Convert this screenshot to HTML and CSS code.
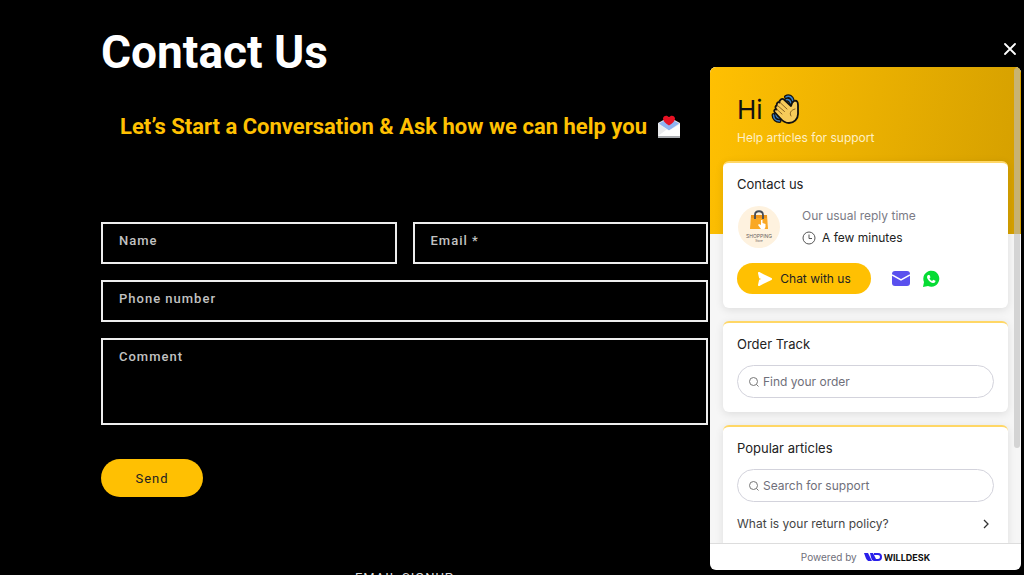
FILE: index.html
```
<!DOCTYPE html>
<html lang="en">
  <head>
    <meta charset="UTF-8" />
    <meta name="viewport" content="width=device-width, initial-scale=1.0" />
    <title>Contact Us</title>
    <link rel="stylesheet" href="styles.css">
  </head>
  <body>
    <main class="page">
      <h1>Contact Us</h1>
      <h2 class="subtitle">
        Let’s Start a Conversation &amp; Ask how we can help you
        <svg class="love-letter" viewBox="0 0 24 24" aria-hidden="true">
          <path d="M1 8 12 2l11 6v14H1z" fill="#e4e6ea" />
          <path d="M2 8.500 12 3l10 5.500-10 7z" fill="#8fb4f2" />
          <path d="M1 9l11 6.500L23 9v13H1z" fill="#fdfdfd" />
          <path d="M1 9l9 5.300L1 21z" fill="#e9eaec" />
          <path d="M1 21h22v2H1z" fill="#a9acb0" />
          <path d="M12 10.500C8 8 6 6 6 3.500c0-3 4.500-4 6-1 1.500-3 6-2 6 1 0 2.500-2 4.500-6 7z" fill="#e81123" />
        </svg>
      </h2>

      <form class="contact-form">
        <div class="field-row">
          <div class="field">
            <input type="text" id="name" name="name" />
            <label for="name">Name</label>
          </div>
          <div class="field">
            <input type="email" id="email" name="email" required />
            <label for="email">Email *</label>
          </div>
        </div>
        <div class="field">
          <input type="tel" id="phone" name="phone" />
          <label for="phone">Phone number</label>
        </div>
        <div class="field">
          <textarea id="comment" name="comment"></textarea>
          <label for="comment">Comment</label>
        </div>
        <button type="submit" class="send-btn">Send</button>
      </form>

      <h2 class="signup-title">EMAIL SIGNUP</h2>
    </main>

    <aside class="chat">
      <button type="button" class="chat-close" aria-label="Close">
        <svg viewBox="0 0 12 12" width="12" height="12">
          <path d="M1 1l10 10M11 1L1 11" stroke="#fff" stroke-width="1.800" stroke-linecap="round" />
        </svg>
      </button>

      <div class="chat-panel">
        <div class="chat-body">
          <div class="chat-header">
            <div class="greeting">
              Hi
              <svg class="wave" viewBox="0 0 28 30" aria-hidden="true">
                <g fill="none" stroke-linecap="round">
                  <path d="M15 3c3-2 6 0 7 4M15 6c2-1 4 0 5 3" stroke="#111" stroke-width="4" />
                  <path d="M2.500 21c0 4 3 6 6 6M5 20c0 3 2 4 4 4" stroke="#111" stroke-width="4" />
                  <path d="M15 3c3-2 6 0 7 4M15 6c2-1 4 0 5 3M2.500 21c0 4 3 6 6 6M5 20c0 3 2 4 4 4" stroke="#3b82c4" stroke-width="1.500" />
                </g>
                <path d="M9 24 3.500 18c-1-2 .500-3 2-2.500-2-2-1-4 .500-4-1-2 1-4 2.500-3C8 6 11 4 13 5.500l7 6.500c.500-2 1-4 3-5 3-1 4 1 4 4v9c0 5-4 9-9 9-4 0-6.500-2-9-5z" fill="#f7cb5a" stroke="#111" stroke-width="1.800" stroke-linejoin="round" />
                <path d="M6 15.500l5 4.500M6.500 11.500l7 6M9 8.500l7 6.500M24 15c-4 1-6 4-4 7" fill="none" stroke="#8a6420" stroke-linecap="round" />
              </svg>
            </div>
            <p>Help articles for support</p>
          </div>

          <div class="card">
            <h3>Contact us</h3>
            <div class="reply">
              <svg class="avatar" viewBox="0 0 42 42" role="img" aria-label="Shopping logo">
                <circle cx="21" cy="21" r="21" fill="#fef2df" />
                <path d="M13 9h16l1 14H12z" fill="#f9a825" />
                <path d="M13 9h16v3H13z" fill="#ef961c" />
                <path d="M17 13V9c0-5 8-5 8 0v4" fill="none" stroke="#444c58" stroke-width="1.800" />
                <path d="M23 23l-3-4 1-1 2 1v-5h1.500v3l3 1v3l-1 2z" fill="#fff" />
                <text x="21" y="32" font-size="5" text-anchor="middle" fill="#69635d">SHOPPING</text>
                <text x="21" y="36" font-size="3" text-anchor="middle" fill="#69635d">Store</text>
              </svg>
              <div>
                <div class="reply-label">Our usual reply time</div>
                <div class="reply-time">
                  <svg viewBox="0 0 14 14" width="14" height="14" fill="none" stroke="#555" aria-hidden="true">
                    <circle cx="7" cy="7" r="6" />
                    <path d="M7 3.500V7.500h3" />
                  </svg>
                  A few minutes
                </div>
              </div>
            </div>
            <div class="channels">
              <button type="button" class="chat-btn">
                <svg viewBox="0 0 16 16" width="16" height="16" aria-hidden="true">
                  <path d="M2 2 14 8 2 14 3 9.500 8 8 3 6.500z" fill="#fff" stroke="#fff" stroke-width="2" stroke-linejoin="round" />
                </svg>
                Chat with us
              </button>
              <a href="#" aria-label="Email">
                <svg viewBox="0 0 18 16" width="18" height="16">
                  <rect width="18" height="15" rx="3" fill="#5a50ee" />
                  <path d="M0 4l9 5 9-5" fill="none" stroke="#fff" stroke-width="1.500" />
                </svg>
              </a>
              <a href="#" aria-label="WhatsApp">
                <svg viewBox="0 0 18 18" width="18" height="18">
                  <path d="M1 17l1-5A8 8 0 1 1 6 16z" fill="#06dc34" />
                  <path d="M6 5l1.500 0 1 2.300-1 1.200c.6 1.200 1.400 1.900 2.600 2.400l1.100-1.200 2.300 1.100c0 1.700-1.300 2.400-2.600 2.200C8 12.500 5.200 9.500 5 7c0-.8.400-1.500 1-2z" fill="#fff" />
                </svg>
              </a>
            </div>
          </div>

          <div class="card">
            <h3>Order Track</h3>
            <div class="search">
              <svg viewBox="0 0 10 10" width="10" height="10" fill="none" stroke="#777" aria-hidden="true">
                <circle cx="4.500" cy="4.500" r="4" />
                <path d="M7.500 7.500l2 2" />
              </svg>
              <input type="text" placeholder="Find your order" aria-label="Find your order" />
            </div>
          </div>

          <div class="card">
            <h3>Popular articles</h3>
            <div class="search">
              <svg viewBox="0 0 10 10" width="10" height="10" fill="none" stroke="#777" aria-hidden="true">
                <circle cx="4.500" cy="4.500" r="4" />
                <path d="M7.500 7.500l2 2" />
              </svg>
              <input type="text" placeholder="Search for support" aria-label="Search for support" />
            </div>
            <a href="#" class="article">
              What is your return policy?
              <svg viewBox="0 0 6 10" width="6" height="10" aria-hidden="true">
                <path d="M1 1l4 4-4 4" fill="none" stroke="#333" stroke-width="1.300" />
              </svg>
            </a>
          </div>
          <div class="scroll-thumb"></div>
        </div>

        <div class="chat-footer">
          Powered by
          <a href="#" class="brand">
            <svg viewBox="0 0 18 8" width="18" height="8" aria-hidden="true">
              <path d="M0 0h4l4 8H5C3 8 2 6 0 0zM6 0h3l4 8h-3C8 8 7 5 6 0z" fill="#2a20ea" />
              <path d="M10 1h4a3 3 0 0 1 0 6h-2" fill="none" stroke="#2a20ea" stroke-width="2" />
            </svg>
            WILLDESK
          </a>
        </div>
      </div>
    </aside>
  </body>
</html>
```

FILE: styles.css
```
* {
  box-sizing: border-box;
}

body {
  display: flex;
  gap: 2px;
  height: 100vh;
  margin: 0;
  overflow: hidden;
  background: #000;
  font-family: Roboto, sans-serif;
}

h1,
h2,
h3,
p {
  margin: 0;
}

a {
  color: inherit;
  text-decoration: none;
}

svg {
  display: block;
  flex-shrink: 0;
}

button,
input,
textarea {
  font-family: inherit;
}

/* contact page */
.page {
  flex: 1;
  min-width: 0;
  padding: 24px 0 0 101px;
}

h1 {
  color: #fff;
  font-size: 46px;
  line-height: 56px;
}

.subtitle {
  display: flex;
  align-items: center;
  justify-content: center;
  gap: 10px;
  margin-top: 32px;
  padding-right: 8px;
  color: #ffc002;
  font-size: 22px;
  line-height: 30px;
  white-space: nowrap;
}

.love-letter {
  width: 24px;
  height: 24px;
}

.contact-form {
  display: flex;
  flex-direction: column;
  gap: 16px;
  margin-top: 80px;
}

.field-row {
  display: grid;
  grid-template-columns: 1fr 1fr;
  gap: 16px;
}

.field {
  position: relative;
}

.field input,
.field textarea {
  display: block;
  width: 100%;
  height: 42px;
  padding: 0 16px;
  background: #000;
  border: 2px solid #eee;
  border-radius: 0;
  color: #fff;
  font-size: 13px;
  resize: none;
}

.field textarea {
  height: 87px;
  padding-top: 10px;
}

.field label {
  position: absolute;
  top: 9px;
  left: 18px;
  color: #c2c2c2;
  font-size: 13px;
  font-weight: 500;
  line-height: 20px;
  letter-spacing: 1px;
  pointer-events: none;
}

.send-btn {
  align-self: flex-start;
  width: 102px;
  height: 38px;
  margin-top: 18px;
  background: #ffc002;
  border: 0;
  border-radius: 19px;
  color: #222;
  font-size: 13px;
  letter-spacing: 1px;
}

.signup-title {
  margin-top: 73px;
  color: #ddd;
  font-size: 13px;
  font-weight: 400;
  line-height: 16px;
  letter-spacing: 1px;
  text-align: center;
}

/* chat widget */
.chat {
  display: flex;
  flex-direction: column;
  width: 311px;
  margin: 0 3px 5px 0;
  font-family: Inter, sans-serif;
  font-size: 12px;
}

.chat-close {
  align-self: flex-end;
  margin: 43px 5px 12px 0;
  padding: 0;
  background: none;
  border: 0;
}

.chat-panel {
  display: flex;
  flex: 1;
  flex-direction: column;
  min-height: 0;
  overflow: hidden;
  background: #fff;
  border-radius: 6px;
}

.chat-body {
  position: relative;
  flex: 1;
  min-height: 0;
  padding: 26px 13px 0;
  overflow: hidden;
  background: linear-gradient(100deg, #ffc002, #d49f00) 0 0 / 100% 167px no-repeat #f6f6f6;
}

.chat-header {
  padding: 0 14px 14px;
}

.greeting {
  display: flex;
  align-items: center;
  gap: 8px;
  height: 32px;
  color: #111;
  font-size: 26px;
}

.wave {
  width: 28px;
  height: 30px;
}

.chat-header p {
  margin-top: 4px;
  color: #fff0c4;
  line-height: 18px;
}

.card {
  margin-bottom: 13px;
  padding: 12px 14px 14px;
  background: #fff;
  border-top: 2px solid #ffd766;
  border-radius: 6px;
  box-shadow: 0 2px 8px rgba(0, 0, 0, 0.1);
}

.card h3 {
  margin-bottom: 12px;
  color: #222;
  font-size: 13px;
  font-weight: 400;
  line-height: 18px;
}

.reply {
  display: flex;
  align-items: center;
  gap: 22px;
  line-height: 22px;
}

.avatar {
  width: 42px;
  height: 42px;
  margin-left: 1px;
}

.reply-label {
  color: #7b7b86;
}

.reply-time {
  display: flex;
  align-items: center;
  gap: 6px;
  color: #222;
}

.channels {
  display: flex;
  align-items: center;
  margin-top: 14px;
}

.channels a {
  margin-right: 12px;
}

.chat-btn {
  display: flex;
  align-items: center;
  justify-content: center;
  gap: 7px;
  width: 134px;
  height: 31px;
  margin-right: 21px;
  padding: 0;
  background: #ffc002;
  border: 0;
  border-radius: 16px;
  color: #222;
  font-size: 12px;
}

.search {
  display: flex;
  align-items: center;
  gap: 4px;
  height: 33px;
  padding: 0 11px;
  border: 1px solid #d3d3dc;
  border-radius: 17px;
}

.search input {
  flex: 1;
  min-width: 0;
  padding: 0;
  background: none;
  border: 0;
  font-size: 12px;
}

.search input::placeholder {
  color: #6f6f7a;
}

.article {
  display: flex;
  align-items: center;
  justify-content: space-between;
  margin-top: 12px;
  padding-right: 5px;
  color: #444;
  line-height: 20px;
}

.scroll-thumb {
  position: absolute;
  top: 1px;
  right: 1px;
  width: 6px;
  height: 380px;
  background: rgba(190, 190, 190, 0.6);
  border-radius: 3px;
}

.chat-footer {
  display: flex;
  align-items: center;
  justify-content: center;
  gap: 7px;
  height: 27px;
  border-top: 1px solid #ddd;
  color: #6f6f7a;
  font-size: 10px;
}

.brand {
  display: flex;
  align-items: center;
  gap: 2px;
  color: #111;
  font-size: 9px;
  font-weight: 700;
}
```
